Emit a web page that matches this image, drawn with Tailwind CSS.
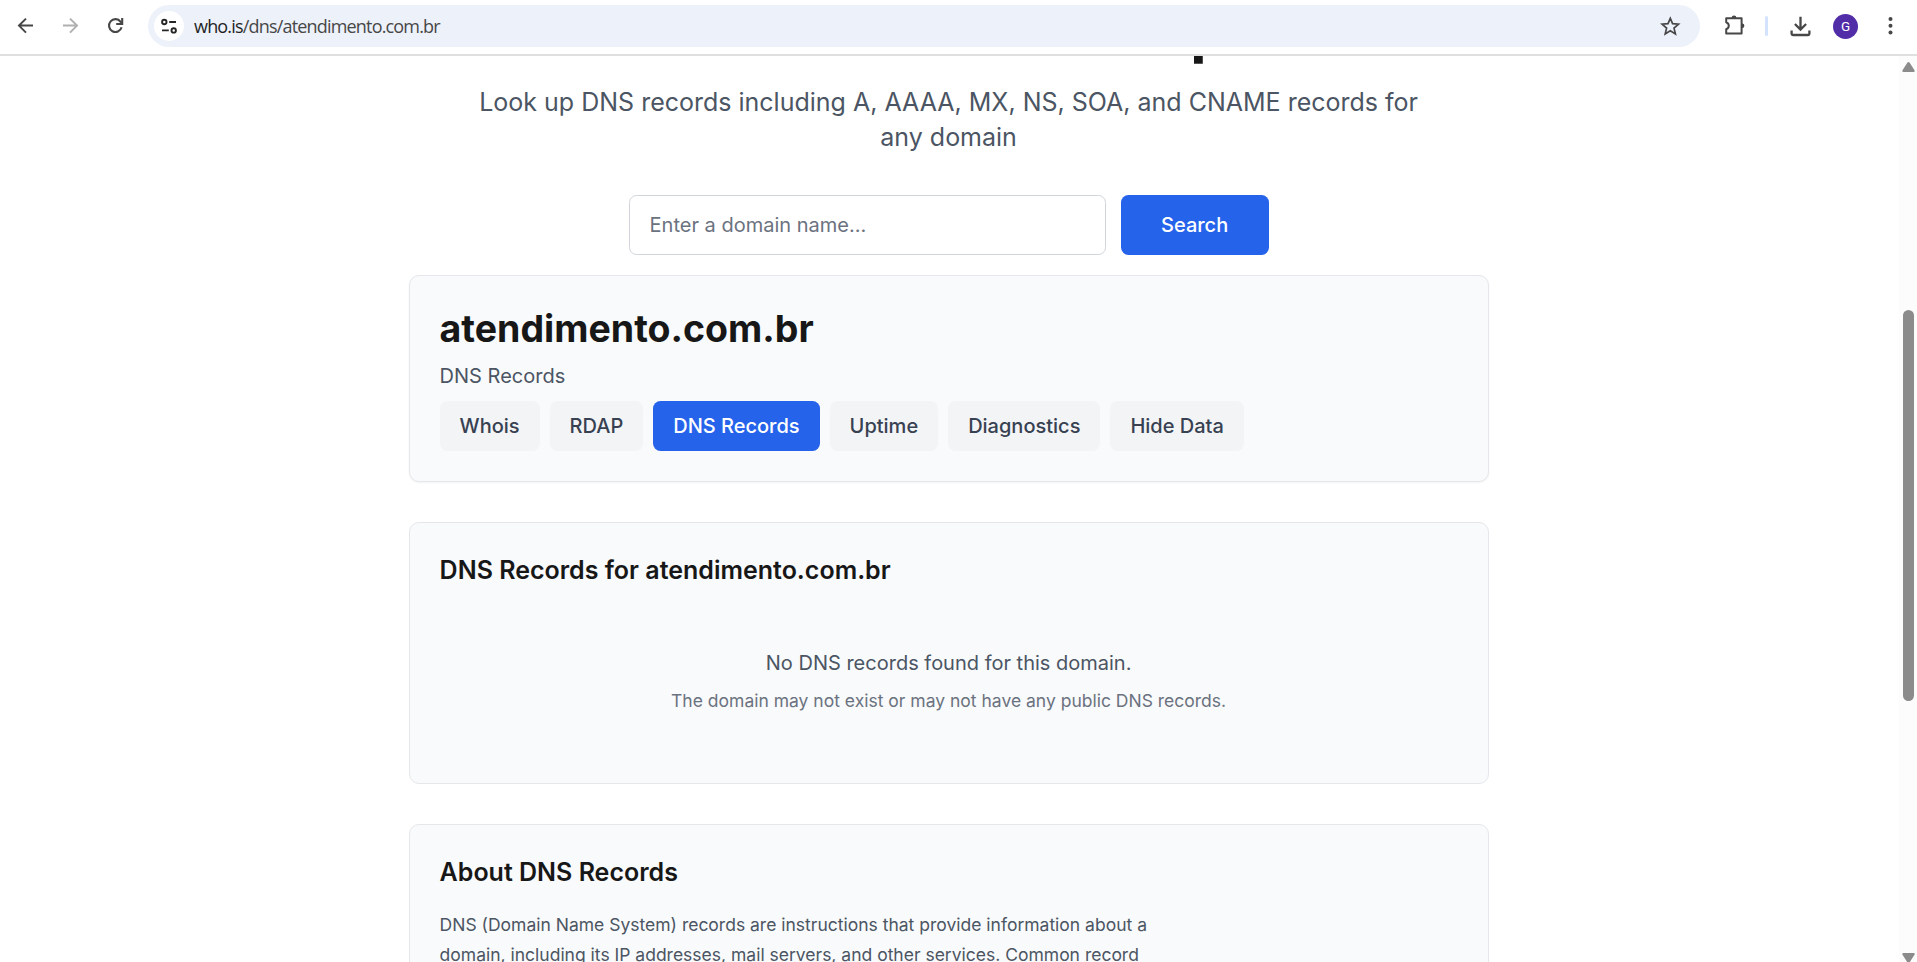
<!DOCTYPE html>
<html lang="en">
<head>
<meta charset="utf-8">
<title>DNS Record Lookup - who.is</title>
<script src="https://cdn.jsdelivr.net/npm/@tailwindcss/browser@4"></script>
</head>
<body class="h-[962px] w-[1917px] overflow-hidden bg-white font-['Inter',sans-serif]">
<div class="flex h-full flex-col">
  <!-- Browser toolbar -->
  <header class="flex h-[56px] shrink-0 items-start border-b-2 border-[#dfdfdf] bg-white pt-[5px] pl-3">
    <div class="flex h-[42px] items-center gap-[17px]">
      <svg class="size-7" viewBox="0 0 28 28" fill="none" stroke="#474747" stroke-width="2"><path d="M21 13.6H7.5M14 6.6l-7 7 7 7"/></svg>
      <svg class="size-7" viewBox="0 0 28 28" fill="none" stroke="#b0b0b0" stroke-width="2"><path d="M6 13.6h13.5M13 6.6l7 7-7 7"/></svg>
      <svg class="size-7" viewBox="0 0 28 28" fill="none" stroke="#474747" stroke-width="2.1"><path d="M19.6 15.2A6.4 6.4 0 1 1 18.6 9.8L20 11.4"/><path d="M20.2 6v6h-6"/></svg>
    </div>
    <div class="ml-[18px] flex h-[42px] w-[1552px] items-center rounded-full bg-[#ecf1fa] pl-1.5">
      <div class="flex size-[30px] items-center justify-center rounded-full bg-white">
        <svg class="size-[30px]" viewBox="0 0 30 30" fill="none" stroke="#252525" stroke-width="1.9"><circle cx="10.3" cy="11" r="2.2"/><path d="M15.2 11h6.8M8 19.4h6.8"/><circle cx="19.7" cy="19.4" r="2.2"/></svg>
      </div>
      <div class="ml-2.5 pt-px font-['Open_Sans',sans-serif] text-[18px] tracking-[-0.82px] whitespace-nowrap text-[#474747]"><span class="text-[#1f1f1f]">who.is</span>/dns/atendimento.com.br</div>
      <svg class="mr-4 ml-auto size-7" viewBox="0 0 28 28" fill="none" stroke="#474747" stroke-width="1.7"><path d="M14.300 6.300l2.300 5.400 5.900.5-4.500 3.900 1.400 5.800-5.100-3.100-5.100 3.100 1.400-5.800-4.500-3.900 5.900-.5z"/></svg>
    </div>
    <div class="flex h-[42px] items-center">
      <svg class="ml-[21px] size-7" viewBox="0 0 28 28" fill="none" stroke="#474747" stroke-width="2" stroke-linejoin="round"><path d="M5.2 6.2H20.6V21.400H5.2V17.3Q7.8 16.4 7.8 13.8Q7.8 11.2 5.2 10.2Z"/><path d="M10.6 6a2.4 2.4 0 0 1 4.8 0zM21 11.4a2.4 2.4 0 0 1 0 4.8z" fill="#474747" stroke="none"/></svg>
      <div class="ml-4 h-5 w-[3px] rounded-full bg-[#d3e3fd]"></div>
      <svg class="ml-[18px] size-7" viewBox="0 0 28 28" fill="none" stroke="#474747" stroke-width="2.3"><path d="M14.5 4.8V17M8.9 12l5.6 5.6 5.6-5.6M5.6 18.6v3.2q0 1.2 1.2 1.2h15.4q1.2 0 1.2-1.2v-3.2"/></svg>
      <div class="ml-[19px] flex size-[25px] items-center justify-center rounded-full bg-[#512da8] font-['Roboto',sans-serif] text-[13.5px] text-white">G</div>
      <svg class="ml-[18px] size-7" viewBox="0 0 28 28" fill="#474747"><circle cx="14.5" cy="7" r="2"/><circle cx="14.5" cy="13.8" r="2"/><circle cx="14.5" cy="20.6" r="2"/></svg>
    </div>
  </header>

  <div class="flex min-h-0 flex-1">
    <!-- Page, scrolled part of the way down -->
    <div class="flex-1 overflow-hidden">
      <main class="-mt-[57px] ml-[408.6px] w-[1080px]">
        <h1 class="mb-[26px] text-center text-[60px] leading-none font-bold tracking-tight whitespace-nowrap text-[#171717]">DNS Record Lookup</h1>
        <p class="text-center text-[25px] leading-[35px] text-[#4b5563]">Look up DNS records including A, AAAA, MX, NS, SOA, and CNAME records for<br>any domain</p>
        <div class="mx-auto mt-10 flex w-[640px] gap-[15px]">
          <div class="flex h-[60px] flex-1 items-center rounded-[7.5px] border border-[#d1d5db] bg-white pl-5 text-[20px] text-[#6b7280]">Enter a domain name...</div>
          <button class="h-[60px] w-[148px] rounded-[7.5px] bg-[#2563eb] text-[20px] font-medium text-white">Search</button>
        </div>

        <section class="mt-5 rounded-[10px] border border-[#e5e7eb] bg-[#f9fafb] p-[30px] shadow-[0_1px_2px_rgba(0,0,0,0.05)]">
          <h2 class="text-[37.5px] leading-[45px] font-bold text-[#171717]">atendimento.com.br</h2>
          <p class="mt-2.5 text-[20px] leading-[30px] text-[#4b5563]">DNS Records</p>
          <nav class="mt-2.5 flex gap-2.5 text-[20px] leading-[30px] font-medium text-[#374151]">
            <a class="rounded-[7.5px] bg-[#f3f4f6] px-5 py-2.5">Whois</a>
            <a class="rounded-[7.5px] bg-[#f3f4f6] px-5 py-2.5">RDAP</a>
            <a class="rounded-[7.5px] bg-[#2563eb] px-5 py-2.5 text-white">DNS Records</a>
            <a class="rounded-[7.5px] bg-[#f3f4f6] px-5 py-2.5">Uptime</a>
            <a class="rounded-[7.5px] bg-[#f3f4f6] px-5 py-2.5">Diagnostics</a>
            <a class="rounded-[7.5px] bg-[#f3f4f6] px-5 py-2.5">Hide Data</a>
          </nav>
        </section>

        <section class="mt-10 rounded-[10px] border border-[#e5e7eb] bg-[#f9fafb] p-[30px]">
          <h2 class="text-[25px] leading-[35px] font-semibold text-[#171717]">DNS Records for atendimento.com.br</h2>
          <div class="mt-5 py-10 text-center">
            <p class="text-[20px] leading-[30px] text-[#4b5563]">No DNS records found for this domain.</p>
            <p class="mt-2.5 text-[17.5px] leading-[25px] text-[#6b7280]">The domain may not exist or may not have any public DNS records.</p>
          </div>
        </section>

        <section class="mt-10 rounded-[10px] border border-[#e5e7eb] bg-[#f9fafb] p-[30px]">
          <h2 class="text-[25px] leading-[35px] font-semibold text-[#171717]">About DNS Records</h2>
          <p class="mt-5 text-[17.5px] leading-[30px] whitespace-nowrap text-[#4b5563]">DNS (Domain Name System) records are instructions that provide information about a<br>domain, including its IP addresses, mail servers, and other services. Common record</p>
        </section>
      </main>
    </div>
    <!-- Scrollbar -->
    <div class="flex w-[18px] flex-col items-center bg-[#fcfcfc] pl-px">
      <svg class="mt-1.5 h-2.5 w-[13px] shrink-0" viewBox="0 0 13 10" fill="#8b8b8b"><path d="M5.3.8q1.2-1.4 2.4 0l4.8 7.4q.7 1.6-.9 1.8H1.4Q-.2 9.8.5 8.200z"/></svg>
      <div class="mt-[238px] h-[391px] w-[11px] shrink-0 rounded-full bg-[#8b8b8b]"></div>
      <svg class="mt-[252px] h-2.5 w-[13px] shrink-0" viewBox="0 0 13 10" fill="#8b8b8b"><path d="M5.300 9.200q1.200 1.400 2.400 0l4.800-7.400q.700-1.600-.900-1.800H1.400Q-.2.2.5 1.800z"/></svg>
    </div>
  </div>
</div>
</body>
</html>
